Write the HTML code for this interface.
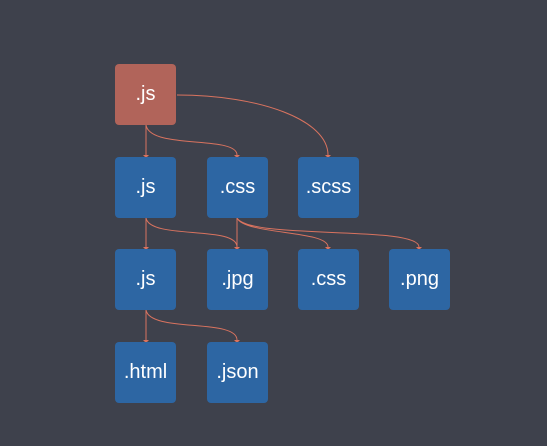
<!DOCTYPE html><html><head><style>
body{margin:0;width:547px;height:446px;background:#3e414c;position:relative;overflow:hidden;font-family:"Liberation Sans",sans-serif}
.b{position:absolute;width:61px;height:61px;border-radius:4px;background:#2d66a3;color:#fff;font-size:20px;display:flex;align-items:center;justify-content:center}
.r{background:#b1645a}
svg{position:absolute;left:0;top:0}
</style></head><body>
<svg width="547" height="446" fill="none" stroke="#d9735f" stroke-width="1">
<path d="M146 125V155M146 125C150 150 237 135 237 155M177 95C260 95 328 120 328 155"/>
<path d="M146 218V247M146 218C150 240 237 225 237 247M237 218V247M237 218C245 235 328 230 328 247M237 218C250 240 419 225 419 247"/>
<path d="M146 310V340M146 310C150 333 237 318 237 340"/>
<g fill="#d9735f" stroke="none">
<path d="M143 155h6l-3 3z M234 155h6l-3 3z M325 155h6l-3 3z M143 247h6l-3 3z M234 247h6l-3 3z M325 247h6l-3 3z M416 247h6l-3 3z M143 340h6l-3 3z M234 340h6l-3 3z"/>
</g></svg>
<div class="b r" style="left:115px;top:64px">.js</div>
<div class="b" style="left:115px;top:157px">.js</div>
<div class="b" style="left:207px;top:157px">.css</div>
<div class="b" style="left:298px;top:157px">.scss</div>
<div class="b" style="left:115px;top:249px">.js</div>
<div class="b" style="left:207px;top:249px">.jpg</div>
<div class="b" style="left:298px;top:249px">.css</div>
<div class="b" style="left:389px;top:249px">.png</div>
<div class="b" style="left:115px;top:342px">.html</div>
<div class="b" style="left:207px;top:342px">.json</div>
</body></html>
